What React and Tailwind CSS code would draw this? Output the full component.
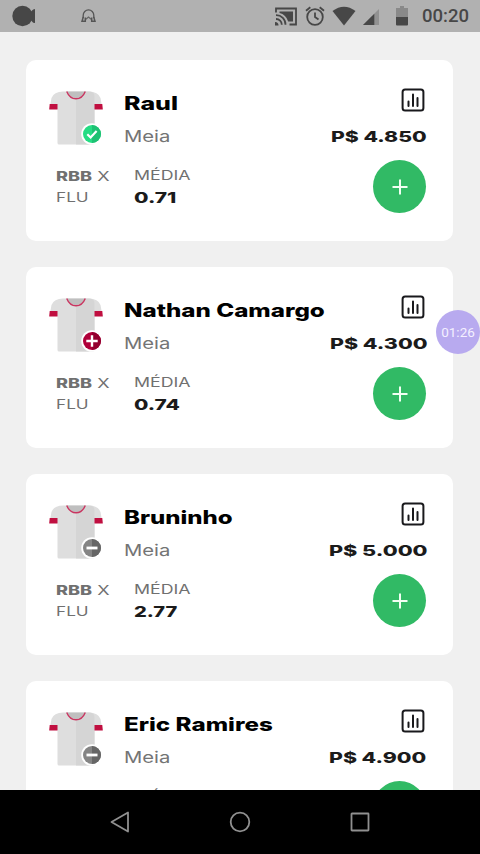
import { useLayoutEffect, useRef, useState } from 'react'

const players = [
  { name: 'Raul', nameWidth: 54, status: 'ok', price: 'P$ 4.850', priceWidth: 96, average: '0.71', averageWidth: 42 },
  { name: 'Nathan Camargo', nameWidth: 201, status: 'injured', price: 'P$ 4.300', priceWidth: 97, average: '0.74', averageWidth: 46 },
  { name: 'Bruninho', nameWidth: 109, status: 'out', price: 'P$ 5.000', priceWidth: 98, average: '2.77', averageWidth: 43 },
  { name: 'Eric Ramires', nameWidth: 149, status: 'out', price: 'P$ 4.900', priceWidth: 98, average: '1.52', averageWidth: 43 },
]

// Extended lettering: stretches a line of text to the given width
const Wide = ({ width, className, children }) => {
  const ref = useRef(null)
  const [scale, setScale] = useState(1)

  useLayoutEffect(() => {
    setScale(width / ref.current.offsetWidth)
  }, [width])

  return (
    <div className={className} style={{ width }}>
      <div className="w-max origin-left" ref={ref} style={{ transform: `scaleX(${scale})` }}>
        {children}
      </div>
    </div>
  )
}

const StatusBadge = ({ status }) => (
  <svg className="absolute left-[32px] top-[32px]" width="22" height="22" viewBox="0 0 22 22" fill="none">
    <circle cx="11" cy="11" r="10.8" fill="#fff" />
    {status === 'ok' && (
      <>
        <circle cx="11" cy="11" r="9" fill="#25dc83" />
        <path d="M11 2a9 9 0 0 1 0 18z" fill="#1ec173" />
        <path d="M6.3 11.3l3.3 3.2 6-6.5" stroke="#fff" strokeWidth="2.2" />
      </>
    )}
    {status === 'injured' && (
      <>
        <circle cx="11" cy="11" r="9" fill="#b0003a" />
        <path d="M11 2a9 9 0 0 1 0 18z" fill="#93002f" />
        <path d="M11 5.3v11.4M5.3 11h11.4" stroke="#fff" strokeWidth="2.4" />
      </>
    )}
    {status === 'out' && (
      <>
        <circle cx="11" cy="11" r="9" fill="#858585" />
        <path d="M11 2a9 9 0 0 1 0 18z" fill="#666" />
        <path d="M5.5 11h11" stroke="#fff" strokeWidth="2.8" />
      </>
    )}
  </svg>
)

const Shirt = ({ status }) => (
  <div className="relative h-[54px] w-[54px]">
    <svg width="54" height="54" viewBox="0 0 54 54" fill="none">
      <path d="M14 .5h26q9 0 11.500 6.500L53.500 18H45.500v34q0 1.500-1.500 1.500H10Q8.500 53.500 8.500 52V18H.5L2.500 7Q5 .5 14 .5z" fill="#dedede" />
      <path d="M27 8q6 0 9.500-7.500H40q5.500 0 5.500 5V52q0 1.500-1.500 1.500H27z" fill="#d5d5d5" />
      <path d="M18 .5h18q-3 6.500-9 6.500t-9-6.500z" fill="#bfbfbf" />
      <path d="M17.700.5q3 7.300 9.300 7.300T36.300.5" stroke="#c93560" strokeWidth="1.400" />
      <path d="M.7 13h7.800v5.500H.2zM45.500 13h7.800l.5 5.500h-8.300z" fill="#c00f40" />
    </svg>
    <StatusBadge status={status} />
  </div>
)

const ChartIcon = () => (
  <svg width="24" height="24" viewBox="0 0 24 24" fill="none" stroke="#19191c" strokeWidth="2">
    <rect x="1.600" y="1.600" width="20.800" height="20.800" rx="2.500" />
    <path d="M7.500 13.500V18M12 6.500V18M16.500 10v8" strokeLinecap="round" />
  </svg>
)

const PlayerCard = ({ player }) => (
  <div className="flex h-[181px] w-[427px] shrink-0 rounded-[10px] bg-white pl-[23px] pr-[26px] pt-[27px]">
    <div className="flex flex-1 flex-col">
      <div className="flex">
        <div className="w-[75px] pt-1">
          <Shirt status={player.status} />
        </div>
        <div className="pt-px">
          <Wide width={player.nameWidth} className="text-[18.5px] font-extrabold leading-[30px] text-black">
            {player.name}
          </Wide>
          <Wide width={47} className="mt-[5px] text-[15.5px] leading-[28px] text-[#747474]">
            Meia
          </Wide>
        </div>
      </div>
      <div className="mt-[14px] flex pl-[7px] text-[13px] leading-[22px] text-[#707070]">
        <div className="w-[78px]">
          <Wide width={53}>
            <span className="font-extrabold">RBB</span> X
          </Wide>
          <Wide width={33} className="-mt-px">FLU</Wide>
        </div>
        <div>
          <Wide width={56} className="-mt-px">MÉDIA</Wide>
          <Wide width={player.averageWidth} className="mt-px text-[14.5px] font-extrabold text-[#1b1b1b]">
            {player.average}
          </Wide>
        </div>
      </div>
    </div>

    <div className="flex flex-col items-end">
      <div className="mr-[2px] mt-px">
        <ChartIcon />
      </div>
      <Wide width={player.priceWidth} className="mt-[10px] text-[15px] font-extrabold leading-[30px] text-[#1b1b1b]">
        {player.price}
      </Wide>
      <button className="mr-px mt-[8px] flex h-[53px] w-[53px] items-center justify-center rounded-full bg-[#31ba65]">
        <svg width="16" height="16" viewBox="0 0 16 16" stroke="#f1fff3" strokeWidth="2">
          <path d="M8 .5v15M.5 8h15" />
        </svg>
      </button>
    </div>
  </div>
)

const StatusBar = () => (
  <header className="flex h-8 shrink-0 items-center bg-[#b1b1b1] text-[#474747]">
    <svg className="ml-3" width="24" height="22" viewBox="0 0 24 22" fill="currentColor">
      <circle cx="10.500" cy="11" r="10.200" />
      <path d="M18 8l2-2.500q1-1.500 3-1.500v14q-2 0-3-1.500L18 14z" />
    </svg>
    <svg className="ml-[45px]" width="15" height="14" viewBox="0 0 15 14" fill="none" stroke="#555" strokeWidth="1.300">
      <path d="M2.200 9V6.200a5.300 5.300 0 0 1 10.600 0V9" />
      <path d="M4.500 10.500l3-2.500 3 2.500" stroke="#666" />
      <path d="M2.300 8L1 12.300h3.300V8.500M12.700 8l1.300 4.300h-3.300V8.500" strokeWidth="1.500" />
    </svg>
    <div className="ml-auto flex items-center pr-[9px]">
      <svg width="22" height="19" viewBox="0 0 22 19" fill="none" stroke="currentColor" strokeWidth="1.800">
        <path d="M1 5.500V1.500h20v16h-6.500" />
        <path d="M1 8.200a9.300 9.300 0 0 1 9.500 9.600M1 12a5.800 5.800 0 0 1 5.800 5.800" />
        <path d="M4.500 4.500h13.500v10h-4.800Q11 7.500 4.500 6z" fill="currentColor" stroke="none" />
        <path d="M0 15a3.500 3.500 0 0 1 3.500 3.500H0z" fill="currentColor" stroke="none" />
      </svg>
      <svg className="ml-[8px]" width="20" height="20" viewBox="0 0 20 20" fill="none" stroke="currentColor" strokeWidth="1.800">
        <circle cx="10" cy="11" r="7.800" />
        <path d="M10 6.500V11l3.500 2.500M1 4.800l4.300-3.600M19 4.800l-4.300-3.600" />
      </svg>
      <svg className="ml-[7px]" width="24" height="20" viewBox="0 0 24 20" fill="currentColor">
        <path d="M.5 5Q12-3.500 23.500 5L12 19.500z" />
      </svg>
      <svg className="ml-[7px] mt-px" width="16" height="16" viewBox="0 0 17 17" fill="currentColor">
        <path d="M17 0v17H0z" fill="#929292" />
        <path d="M12 5v12H0z" />
      </svg>
      <svg className="ml-[17px]" width="12" height="20" viewBox="0 0 12 20" fill="currentColor">
        <path d="M4 0h4v2h4v9H0V2h4z" fill="#898989" />
        <path d="M0 11h12v7.500q0 1-1 1H1q-1 0-1-1z" />
      </svg>
      <span className="ml-[14px] w-[49px] font-[Roboto] text-[18.5px] font-medium leading-8">00:20</span>
    </div>
  </header>
)

const NavBar = () => (
  <nav className="flex h-16 shrink-0 items-center justify-center gap-[98px] bg-black">
    <svg width="22" height="22" viewBox="0 0 22 22" fill="none" stroke="#909090" strokeWidth="1.800" strokeLinejoin="round">
      <path d="M19 1.500v19L2.500 11z" />
    </svg>
    <svg width="22" height="22" viewBox="0 0 22 22" fill="none" stroke="#909090" strokeWidth="1.800">
      <circle cx="11" cy="11" r="9.300" />
    </svg>
    <svg width="22" height="22" viewBox="0 0 22 22" fill="none" stroke="#909090" strokeWidth="1.800">
      <rect x="2.500" y="2.500" width="17" height="17" rx=".5" />
    </svg>
  </nav>
)

const App = () => {
  return (
    <div className="relative flex h-[854px] w-[480px] flex-col overflow-hidden bg-[#f0f0f0] font-['Inter',sans-serif]">
      <StatusBar />
      <main className="flex min-h-0 flex-1 flex-col gap-[26px] overflow-hidden pl-[26px] pt-[28px]">
        {players.map((player) => (
          <PlayerCard key={player.name} player={player} />
        ))}
      </main>
      <NavBar />

      {/* Recording timer */}
      <div className="absolute left-[436px] top-[310px] flex h-11 w-11 items-center justify-center rounded-full bg-[#b8aaef] font-[Roboto] text-[13.5px] text-[#f4f0ff]">
        01:26
      </div>
    </div>
  )
}

export default App
